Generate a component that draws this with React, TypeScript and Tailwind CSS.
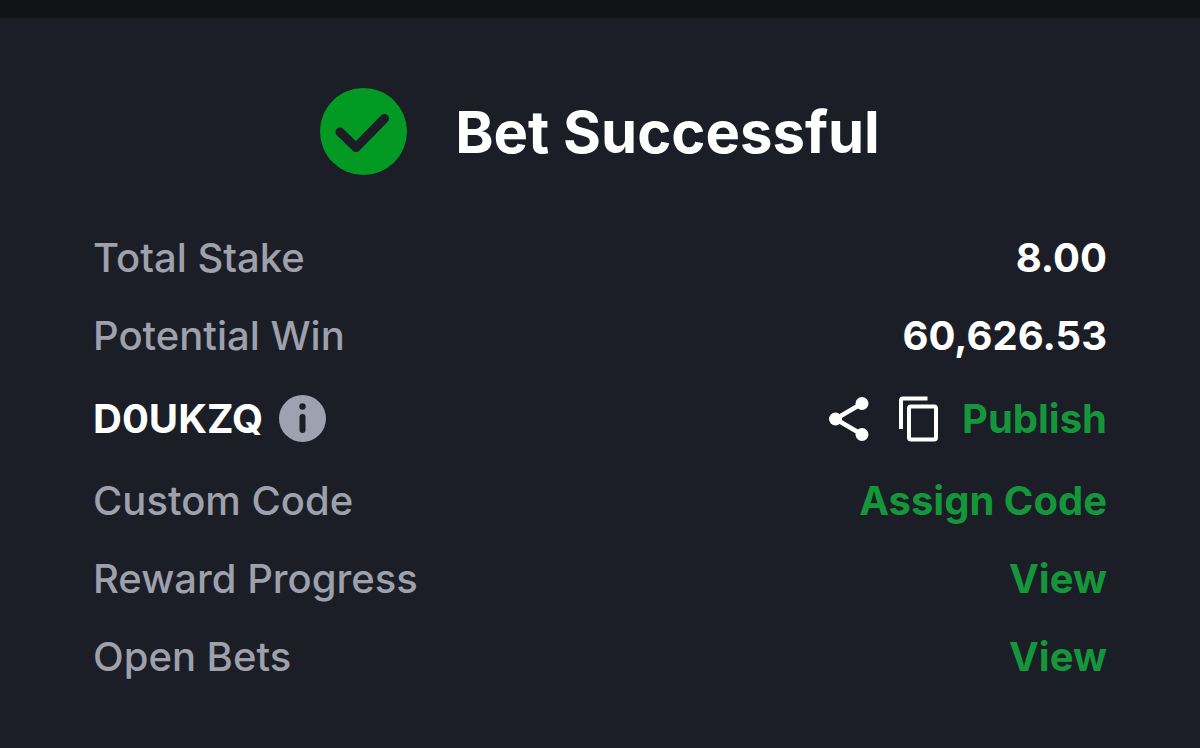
import type { ReactNode } from 'react';

function SuccessIcon() {
  return (
    <svg viewBox="0 0 87 87" className="size-[87px] shrink-0" aria-hidden="true">
      <circle cx="43.5" cy="43.5" r="43.5" fill="#029a23" />
      <path
        d="M20 44 36 59.500 64.500 30.500"
        fill="none"
        stroke="#1b1e26"
        strokeWidth="9"
        strokeLinecap="round"
        strokeLinejoin="round"
      />
    </svg>
  );
}

function InfoIcon() {
  return (
    <svg viewBox="0 0 47 47" className="size-[47px]" aria-hidden="true">
      <circle cx="23.5" cy="23.5" r="23.5" fill="#9ea1b0" />
      <circle cx="23.5" cy="11.5" r="3.2" fill="#1b1e26" />
      <path d="M23.5 22v13" stroke="#1b1e26" strokeWidth="6" strokeLinecap="round" />
    </svg>
  );
}

function ShareIcon() {
  return (
    <svg viewBox="0 0 40 46" className="h-[46px] w-10" aria-hidden="true">
      <path d="M33 7.5 6.5 23 33 38.5" fill="none" stroke="#fff" strokeWidth="4.5" />
      <circle cx="33" cy="7.5" r="6.5" fill="#fff" />
      <circle cx="6.5" cy="23" r="6.5" fill="#fff" />
      <circle cx="33" cy="38.5" r="6.5" fill="#fff" />
    </svg>
  );
}

function CopyIcon() {
  return (
    <svg viewBox="0 0 40 46" className="h-[46px] w-10" aria-hidden="true">
      <g fill="none" stroke="#fff" strokeWidth="4">
        <path d="M2 33V4.500Q2 2.500 4 2.500H28.500" />
        <rect x="10" y="10.500" width="27" height="33" rx="2" />
      </g>
    </svg>
  );
}

function Row({ label, children }: { label: string; children: ReactNode }) {
  return (
    <li className="flex h-[78px] items-center justify-between">
      <span className="font-medium text-[#9ea1ac]">{label}</span>
      {children}
    </li>
  );
}

function Action({ children, label }: { children: ReactNode; label?: string }) {
  return (
    <button type="button" aria-label={label} className="cursor-pointer font-bold text-[#15963a]">
      {children}
    </button>
  );
}

export default function App() {
  return (
    <main className="min-h-screen border-t-18 border-[#111216] bg-[#1b1e26] font-['Inter',sans-serif] text-white">
      <header className="flex items-center justify-center gap-12 pt-[70px]">
        <SuccessIcon />
        <h1 className="text-[58px] leading-[72px] font-bold">Bet Successful</h1>
      </header>

      <ul className="mt-11 px-[93px] text-[40px] leading-12">
        <Row label="Total Stake">
          <span className="font-bold">8.00</span>
        </Row>
        <Row label="Potential Win">
          <span className="font-bold">60,626.53</span>
        </Row>
        <li className="flex h-[87px] items-center justify-between">
          <div className="flex items-center gap-4">
            <span className="font-bold">D0UKZQ</span>
            <button type="button" aria-label="About this code" className="cursor-pointer">
              <InfoIcon />
            </button>
          </div>
          <div className="flex items-center">
            <button type="button" aria-label="Share" className="mr-[30px] cursor-pointer">
              <ShareIcon />
            </button>
            <button type="button" aria-label="Copy code" className="mr-[23px] cursor-pointer">
              <CopyIcon />
            </button>
            <Action>Publish</Action>
          </div>
        </li>
        <Row label="Custom Code">
          <Action>Assign Code</Action>
        </Row>
        <Row label="Reward Progress">
          <Action label="View reward progress">View</Action>
        </Row>
        <Row label="Open Bets">
          <Action label="View open bets">View</Action>
        </Row>
      </ul>
    </main>
  );
}
